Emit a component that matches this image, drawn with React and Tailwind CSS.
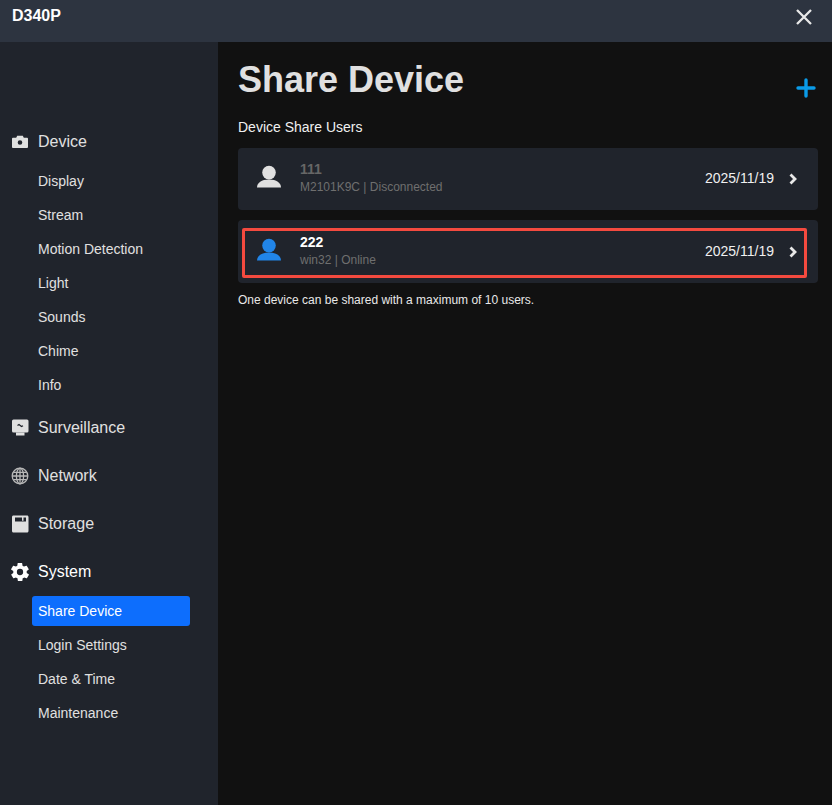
const CameraIcon = () => (
  <svg width="18" height="18" viewBox="0 0 18 18" className="text-[#e0e0e0]">
    <path
      fillRule="evenodd"
      fill="currentColor"
      d="M6.200 2.800h5.600l1 2h3.300c.6 0 .9.400.9.900v8.400c0 .6-.4.900-.9.900H1.900c-.6 0-.9-.4-.9-.9V5.700c0-.6.400-.9.900-.9h3.300zM9 7.200a2.300 2.300 0 1 0 0 4.600 2.300 2.300 0 0 0 0-4.600z"
    />
  </svg>
);

const MonitorIcon = () => (
  <svg width="18" height="18" viewBox="0 0 18 18" className="text-[#e0e0e0]">
    <rect x="1" y="0.500" width="16.500" height="13" rx="1.500" fill="currentColor" />
    <rect x="5" y="13.500" width="8.500" height="3" fill="currentColor" />
    <path d="M6.500 6.500l1.500-1 2.500 2 1.500-.8" fill="none" stroke="#20242c" strokeWidth="1.200" />
  </svg>
);

const GlobeIcon = () => (
  <svg width="18" height="18" viewBox="0 0 18 18" fill="none" stroke="#b8b8b8" strokeWidth="1.300">
    <circle cx="9" cy="9" r="7.800" />
    <ellipse cx="9" cy="9" rx="3.600" ry="7.800" />
    <path d="M9 1.200v15.600M1.200 9h15.600M2.400 5.400h13.200M2.400 12.600h13.200" />
  </svg>
);

const StorageIcon = () => (
  <svg width="18" height="18" viewBox="0 0 18 18" className="text-[#e0e0e0]">
    <path
      fillRule="evenodd"
      fill="currentColor"
      d="M2.500 0.500h13.500c.9 0 1.500.6 1.500 1.500v14c0 .9-.6 1.500-1.500 1.500H2.500c-.9 0-1.500-.6-1.500-1.500V2c0-.9.600-1.500 1.500-1.500zM4 2.500v4h11v-4h-2.500v3.200h-1.500V2.500z"
    />
  </svg>
);

const GearIcon = () => (
  <svg width="18" height="18" viewBox="2 2 20 20" className="text-white">
    <path
      fill="currentColor"
      d="M19.400 13c.1-.3.100-.7.100-1s0-.7-.1-1l2.100-1.600c.2-.2.300-.5.100-.7l-2-3.500c-.1-.2-.4-.3-.6-.2l-2.500 1a7.600 7.600 0 0 0-1.700-1l-.4-2.600c0-.2-.3-.4-.5-.4h-4c-.3 0-.5.200-.5.400l-.4 2.600c-.6.300-1.200.600-1.700 1l-2.500-1c-.2-.1-.5 0-.6.200l-2 3.500c-.1.200-.1.500.1.700L4.600 11c-.1.300-.1.700-.1 1s0 .7.100 1l-2.100 1.600c-.2.200-.3.500-.1.700l2 3.500c.1.200.4.300.6.200l2.500-1c.5.400 1.100.700 1.700 1l.4 2.600c0 .2.200.4.500.4h4c.2 0 .5-.2.500-.4l.4-2.600c.6-.3 1.200-.6 1.700-1l2.500 1c.2.100.5 0 .6-.2l2-3.500c.1-.2.100-.5-.1-.7zM12 15.500a3.500 3.500 0 1 1 0-7 3.500 3.500 0 0 1 0 7z"
    />
  </svg>
);

const UserIcon = ({ className }) => (
  <svg width="24" height="24" viewBox="0 0 24 24" className={`mb-1 ${className}`}>
    <circle cx="12" cy="7.600" r="6.800" fill="currentColor" />
    <path fill="currentColor" d="M0 22.500c0-4.500 4.500-8 12-8s12 3.500 12 8z" />
  </svg>
);

const Chevron = () => (
  <svg width="10" height="12" viewBox="0 0 10 12" fill="none" stroke="#e8e8e8" strokeWidth="2.800">
    <path d="M2.500 1.500L7 6l-4.500 4.500" />
  </svg>
);

const groups = [
  {
    label: "Device",
    icon: <CameraIcon />,
    items: ["Display", "Stream", "Motion Detection", "Light", "Sounds", "Chime", "Info"],
  },
  { label: "Surveillance", icon: <MonitorIcon /> },
  { label: "Network", icon: <GlobeIcon /> },
  { label: "Storage", icon: <StorageIcon /> },
  {
    label: "System",
    icon: <GearIcon />,
    items: ["Share Device", "Login Settings", "Date & Time", "Maintenance"],
  },
];

const Sidebar = () => {
  return (
    <aside className="w-[218px] shrink-0 bg-[#20242c] pt-[76px]">
      {groups.map((group) => (
        <div key={group.label}>
          <div
            className={`flex h-12 items-center gap-[9px] pl-[11px] text-base ${
              group.label === "System" ? "text-white" : "text-[#e0e0e0]"
            }`}
          >
            {group.icon}
            <span>{group.label}</span>
          </div>
          {group.items && (
            <div className="mb-1 flex flex-col gap-1 pl-8 pr-7">
              {group.items.map((item) => (
                <div
                  key={item}
                  className={`flex h-[30px] items-center rounded-[3px] pl-1.5 text-sm ${
                    item === "Share Device" ? "bg-[#0d6efd] text-white" : "text-[#e0e0e0]"
                  }`}
                >
                  {item}
                </div>
              ))}
            </div>
          )}
        </div>
      ))}
    </aside>
  );
};

const UserRow = ({ name, sub, online }) => {
  return (
    <div
      className={`relative flex items-center rounded-[4px] bg-[#20242c] pl-[19px] pr-[20px] ${
        online ? "h-[63px]" : "h-[62px]"
      }`}
    >
      <UserIcon className={online ? "text-[#2185e8]" : "text-[#e0e0e0]"} />
      <div className="mb-0.5 ml-[19px] flex-1">
        <div className={`text-sm font-bold leading-[18px] ${online ? "text-white" : "text-[#666666]"}`}>
          {name}
        </div>
        <div className="text-xs leading-[18px] text-[#6f6f6f]">{sub}</div>
      </div>
      <span className="mb-0.5 mr-[14px] text-sm text-[#f0f0f0]">2025/11/19</span>
      <Chevron />
      {online && (
        <div className="absolute bottom-[5px] left-1 right-[11px] top-2 rounded-[2px] border-[3px] border-[#f44a3f]" />
      )}
    </div>
  );
};

export default function App() {
  return (
    <div className="flex h-[805px] w-[832px] flex-col overflow-hidden bg-[#111111] font-['Liberation_Sans',Arial,sans-serif]">
      <header className="flex h-[42px] shrink-0 items-start justify-between bg-[#2d3440] pl-3 pr-[19px]">
        <span className="mt-[7px] text-base font-bold leading-[18px] text-white">D340P</span>
        <svg width="18" height="18" viewBox="0 0 18 18" fill="none" stroke="#e8e8e8" strokeWidth="2.300" className="mt-2">
          <path d="M2 2l14 14M16 2L2 16" />
        </svg>
      </header>
      <div className="flex flex-1">
        <Sidebar />
        <main className="flex-1 pl-5 pr-3.5">
          <div className="flex items-start justify-between pt-[17px]">
            <h1 className="text-4xl font-bold leading-[41px] text-[#e0e0e0]">Share Device</h1>
            <svg width="20" height="20" viewBox="0 0 20 20" fill="none" stroke="#0a9be8" strokeWidth="3.400" strokeLinecap="round" className="mr-0.5 mt-[19px]">
              <path d="M10 2v16M2 10h16" />
            </svg>
          </div>
          <h2 className="mt-[19px] text-sm leading-4 text-[#f0f0f0]">Device Share Users</h2>
          <div className="mt-[13px] flex flex-col gap-2.5">
            <UserRow name="111" sub="M2101K9C | Disconnected" />
            <UserRow name="222" sub="win32 | Online" online />
          </div>
          <p className="mt-[10px] text-xs leading-[14px] text-[#e8e8e8]">
            One device can be shared with a maximum of 10 users.
          </p>
        </main>
      </div>
    </div>
  );
}
